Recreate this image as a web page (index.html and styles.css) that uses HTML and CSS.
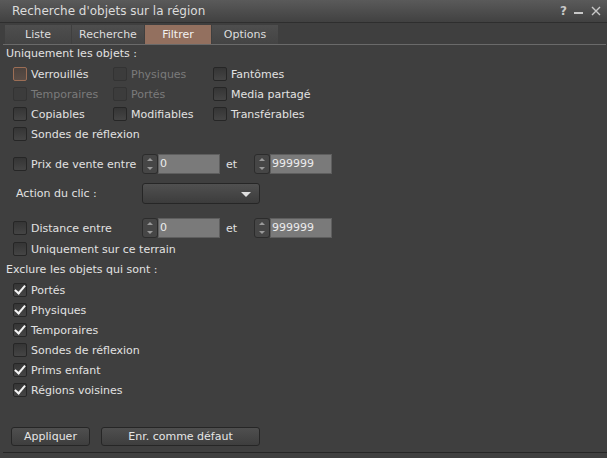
FILE: index.html
```html
<!DOCTYPE html>
<html lang="fr">
<head>
  <meta charset="UTF-8">
  <title>Recherche d'objets sur la région</title>
  <link rel="stylesheet" href="styles.css">
</head>
<body>
  <div class="floater">
    <div class="titlebar">
      <span class="title">Recherche d'objets sur la région</span>
      <div class="controls">
        <span class="ctl">?</span>
        <svg class="ctl-svg" width="10" height="10" viewBox="0 0 10 10"><rect x="0" y="6" width="9" height="2" fill="#c8c8c8"/></svg>
        <svg class="ctl-svg" width="10" height="10" viewBox="0 0 10 10"><path d="M1 1 L9 9 M9 1 L1 9" stroke="#c8c8c8" stroke-width="1.4"/></svg>
      </div>
    </div>

    <div class="tabs">
      <div class="tab">Liste</div>
      <div class="tab">Recherche</div>
      <div class="tab active">Filtrer</div>
      <div class="tab">Options</div>
    </div>

    <div class="panel">
      <div class="heading">Uniquement les objets :</div>
      <div class="grid">
        <label class="cb"><span class="box focus"></span>Verrouillés</label>
        <label class="cb disabled"><span class="box"></span>Physiques</label>
        <label class="cb"><span class="box"></span>Fantômes</label>
        <label class="cb disabled"><span class="box"></span>Temporaires</label>
        <label class="cb disabled"><span class="box"></span>Portés</label>
        <label class="cb"><span class="box"></span>Media partagé</label>
        <label class="cb"><span class="box"></span>Copiables</label>
        <label class="cb"><span class="box"></span>Modifiables</label>
        <label class="cb"><span class="box"></span>Transférables</label>
        <label class="cb wide"><span class="box"></span>Sondes de réflexion</label>
      </div>

      <div class="range-row price">
        <label class="cb range-label"><span class="box"></span>Prix de vente entre</label>
        <div class="spinner">
          <div class="arrows"><span class="up"></span><span class="down"></span></div>
          <div class="field">0</div>
        </div>
        <span class="et">et</span>
        <div class="spinner">
          <div class="arrows"><span class="up"></span><span class="down"></span></div>
          <div class="field">999999</div>
        </div>
      </div>

      <div class="action-row">
        <span class="action-label">Action du clic :</span>
        <div class="combo"><span class="caret"></span></div>
      </div>

      <div class="range-row distance">
        <label class="cb range-label"><span class="box"></span>Distance entre</label>
        <div class="spinner">
          <div class="arrows"><span class="up"></span><span class="down"></span></div>
          <div class="field">0</div>
        </div>
        <span class="et">et</span>
        <div class="spinner">
          <div class="arrows"><span class="up"></span><span class="down"></span></div>
          <div class="field">999999</div>
        </div>
      </div>

      <label class="cb single"><span class="box"></span>Uniquement sur ce terrain</label>

      <div class="heading exclude">Exclure les objets qui sont :</div>
      <div class="list">
        <label class="cb"><span class="box checked"></span>Portés</label>
        <label class="cb"><span class="box checked"></span>Physiques</label>
        <label class="cb"><span class="box checked"></span>Temporaires</label>
        <label class="cb"><span class="box"></span>Sondes de réflexion</label>
        <label class="cb"><span class="box checked"></span>Prims enfant</label>
        <label class="cb"><span class="box checked"></span>Régions voisines</label>
      </div>

      <div class="buttons">
        <button class="btn apply">Appliquer</button>
        <button class="btn save">Enr. comme défaut</button>
      </div>
    </div>
    <div class="bottom-line"></div>
  </div>
</body>
</html>
```

FILE: styles.css
```css
body {
  margin: 0;
  background-color: #3f3f3f;
  font-family: "DejaVu Sans", sans-serif;
  font-size: 11px;
  color: #e2e2e2;
}
.floater {
  width: 607px;
  height: 458px;
  background: #3f3f3f;
  position: relative;
  overflow: hidden;
}
.titlebar {
  height: 22px;
  border-bottom: 1px solid #2e2e2e;
  background: linear-gradient(#5a5a5a, #414141);
  display: flex;
  align-items: center;
  justify-content: space-between;
  padding: 0 6px 0 12px;
}
.title {
  font-size: 12px;
  color: #dcdcdc;
}
.controls {
  display: flex;
  align-items: center;
  gap: 7px;
}
.ctl {
  font-weight: bold;
  color: #c8c8c8;
  font-size: 12px;
}
.tabs {
  display: flex;
  margin: 2px 1px 0 3px;
  padding-left: 2px;
  border-bottom: 1px solid #6a6a6a;
}
.tab {
  width: 66px;
  height: 19px;
  margin-right: 1px;
  background: linear-gradient(#4e4e4e, #444);
  color: #dedede;
  text-align: center;
  line-height: 19px;
}
.tab:nth-child(2) {
  width: 72px;
}
.tab.active {
  background: #93705f;
  color: #f2f2f2;
}
.panel {
  padding-left: 6px;
}
.heading {
  height: 14px;
  line-height: 14px;
  margin-top: 2px;
}
.grid {
  display: grid;
  grid-template-columns: 100px 100px 200px;
  padding-left: 7px;
  margin-top: 3px;
}
.cb {
  display: flex;
  align-items: center;
  height: 20px;
  gap: 4px;
  white-space: nowrap;
}
.cb.wide {
  grid-column: span 3;
}
.cb.disabled {
  color: #7b7b7b;
}
.box {
  width: 12px;
  height: 12px;
  border: 1px solid #262626;
  border-radius: 2px;
  background: linear-gradient(#353535, #454545);
  position: relative;
  flex: none;
}
.cb.disabled .box {
  border-color: #333;
  background: #3c3c3c;
}
.box.focus {
  border-color: #9c6e55;
  background: linear-gradient(#4d433e, #5a4d46);
}
.box.checked::after {
  content: "";
  position: absolute;
  left: 3px;
  top: -1px;
  width: 4px;
  height: 9px;
  border-right: 2.5px solid #f4f4f4;
  border-bottom: 2.5px solid #f4f4f4;
  transform: rotate(40deg);
}
.range-row {
  display: flex;
  align-items: center;
  height: 20px;
  padding-left: 7px;
}
.price {
  margin-top: 10px;
}
.distance {
  margin-top: 14px;
}
.range-label {
  width: 129px;
  flex: none;
}
.spinner {
  display: flex;
  height: 20px;
  flex: none;
}
.arrows {
  width: 14px;
  height: 18px;
  border: 1px solid #2c2c2c;
  border-radius: 3px;
  background: #464646;
  display: flex;
  flex-direction: column;
  align-items: center;
  justify-content: space-around;
}
.up, .down {
  width: 0;
  height: 0;
  border-left: 3px solid transparent;
  border-right: 3px solid transparent;
}
.up {
  border-bottom: 3px solid #9a9a9a;
}
.down {
  border-top: 3px solid #9a9a9a;
}
.field {
  width: 59px;
  height: 18px;
  background: #7a7a7a;
  border: 1px solid #5e5e5e;
  color: #ececec;
  line-height: 18px;
  padding-left: 1px;
}
.et {
  width: 28px;
  flex: none;
  padding-left: 6px;
}
.action-row {
  display: flex;
  align-items: center;
  height: 21px;
  margin-top: 9px;
  padding-left: 10px;
}
.action-label {
  width: 126px;
}
.combo {
  width: 116px;
  height: 19px;
  border: 1px solid #262626;
  border-radius: 3px;
  background: linear-gradient(#505050, #3c3c3c);
  position: relative;
}
.caret {
  position: absolute;
  right: 8px;
  top: 8px;
  border-left: 5px solid transparent;
  border-right: 5px solid transparent;
  border-top: 5px solid #e0e0e0;
}
.single {
  padding-left: 7px;
  margin-top: 1px;
}
.exclude {
  margin-top: 4px;
}
.list {
  padding-left: 7px;
  margin-top: 3px;
}
.buttons {
  display: flex;
  gap: 11px;
  margin-top: 27px;
  padding-left: 5px;
}
.btn {
  height: 19px;
  border: 1px solid #262626;
  border-radius: 3px;
  background: linear-gradient(#4f4f4f, #3e3e3e);
  color: #e6e6e6;
  font-family: "DejaVu Sans", sans-serif;
  font-size: 11px;
  padding: 0;
}
.apply {
  width: 79px;
}
.save {
  width: 159px;
}
.bottom-line {
  position: absolute;
  left: 3px;
  right: 0;
  top: 452px;
  height: 1px;
  background: #262626;
}
```
